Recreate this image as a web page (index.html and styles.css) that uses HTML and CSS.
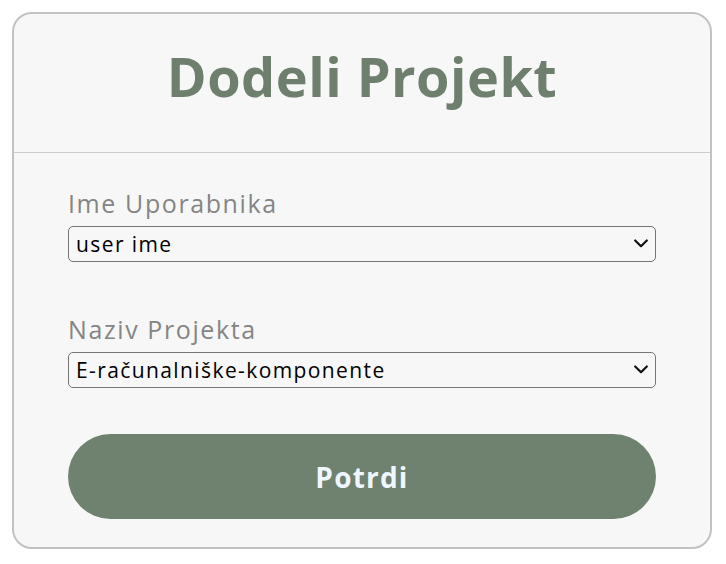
FILE: index.html
```html
<!DOCTYPE html>
<html lang="sl">
<head>
<meta charset="utf-8">
<title>Dodeli Projekt</title>
<link rel="stylesheet" href="styles.css">
</head>
<body>
<div class="card">
  <div class="card-header">
    <h1 class="title">Dodeli Projekt</h1>
  </div>
  <form class="form">
    <label class="label" for="user">Ime Uporabnika</label>
    <div class="select-wrap">
      <select class="select" id="user">
        <option>user ime</option>
      </select>
      <svg class="chevron" width="14" height="9" viewBox="0 0 14 9" aria-hidden="true">
        <path d="M1.2 1.5 L7 7.2 L12.8 1.5" fill="none" stroke="#111" stroke-width="2.2" stroke-linecap="round" stroke-linejoin="round"/>
      </svg>
    </div>
    <label class="label label-second" for="project">Naziv Projekta</label>
    <div class="select-wrap">
      <select class="select" id="project">
        <option>E-računalniške-komponente</option>
      </select>
      <svg class="chevron" width="14" height="9" viewBox="0 0 14 9" aria-hidden="true">
        <path d="M1.2 1.5 L7 7.2 L12.8 1.5" fill="none" stroke="#111" stroke-width="2.2" stroke-linecap="round" stroke-linejoin="round"/>
      </svg>
    </div>
    <button class="submit" type="button">Potrdi</button>
  </form>
</div>
</body>
</html>
```

FILE: styles.css
```css
html, body {
  margin: 0;
  padding: 0;
  background: #ffffff;
}
body {
  font-family: "Open Sans", "DejaVu Sans", sans-serif;
}
.card {
  margin: 12px 0 0 12px;
  width: 696px;
  height: 533px;
  border: 2px solid #c2c2c2;
  border-radius: 20px;
  background: #f7f7f7;
  box-sizing: content-box;
  overflow: hidden;
}
.card-header {
  height: 138px;
  border-bottom: 1px solid #cccccc;
  display: flex;
  justify-content: center;
}
.title {
  margin: 25px 0 0 0;
  font-size: 54px;
  line-height: 74px;
  font-weight: 700;
  color: #6e806d;
  letter-spacing: 0.5px;
}
.form {
  display: flex;
  flex-direction: column;
  padding: 32px 54px 0 54px;
}
.label {
  font-size: 25px;
  line-height: 36px;
  color: #858585;
  letter-spacing: 1.6px;
  margin-bottom: 5px;
}
.label-second {
  margin-top: 49px;
}
.select-wrap {
  position: relative;
  display: flex;
}
.select {
  flex: 1;
  appearance: none;
  -webkit-appearance: none;
  height: 36px;
  font-family: inherit;
  font-size: 21px;
  letter-spacing: 1.4px;
  color: #000;
  border: 1px solid #767676;
  border-radius: 5px;
  background-color: transparent;
  padding: 0 30px 0 7px;
  margin: 0;
}
.chevron {
  position: absolute;
  right: 8px;
  top: 13px;
  pointer-events: none;
}
.submit {
  margin-top: 46px;
  height: 85px;
  border: none;
  border-radius: 43px;
  background: #6f8270;
  color: #eef7ff;
  font-family: inherit;
  font-size: 28px;
  font-weight: 700;
  letter-spacing: 1.2px;
}
```
